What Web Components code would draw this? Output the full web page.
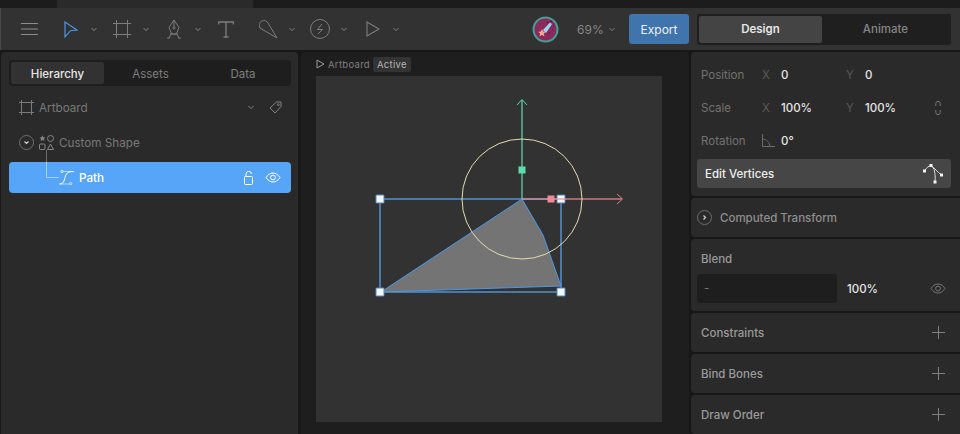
<!doctype html>
<html>
<head>
<meta charset="utf-8">
<style>
  html, body { margin: 0; height: 100%; background: #171717; overflow: hidden; }
  body { font: 11.5px Inter, "Liberation Sans", sans-serif; }
</style>
</head>
<body>
<editor-app></editor-app>
<script>
// small helper so every element gets its shadow root the same way
class Base extends HTMLElement {
  connectedCallback() {
    if (this.shadowRoot) return;
    this.attachShadow({ mode: "open" });
    this.shadowRoot.innerHTML = this.render();
  }
}

const caret = `<svg class="caret" width="6" height="5" viewBox="0 0 6 5" fill="none" stroke="#858585" stroke-width="1"><path d="M.5 1L3 3.600 5.500 1"/></svg>`;
const eye = (c) => `<svg width="16" height="11" viewBox="0 0 16 11" fill="none" stroke="${c}" stroke-width="1"><path d="M1 5.500C3 2.500 5.300 1 8 1s5 1.500 7 4.500C13 8.500 10.700 10 8 10S3 8.500 1 5.500z"/><circle cx="8" cy="5.500" r="2.400"/></svg>`;

customElements.define("tool-button", class extends Base {
  render() {
    const hasCaret = this.hasAttribute("caret");
    return `<style>
      :host { display: flex; align-items: center; flex: none; }
      ::slotted(svg) { display: block; }
      .caret { margin-left: var(--caret-gap, 12px); display: block; }
    </style><slot></slot>${hasCaret ? caret : ""}`;
  }
});

customElements.define("app-toolbar", class extends Base {
  render() {
    return `<style>
      :host { display: block; flex: none; }
      .strip { height: 8px; display: flex; background: #1c1c1c; }
      .strip i { display: block; width: 196px; margin-left: 57px; background: #2a2a2a; }
      .bar { height: 42px; background: #323232; display: flex; align-items: center; border-left: 1px solid #4a4a4a; box-sizing: border-box; }
      .tools { display: flex; align-items: center; }
      .spacer { flex: 1; }
      .zoom { color: #858585; font-size: 12px; display: flex; align-items: center; gap: 5px; width: 46px; margin-left: 18px; flex: none; }
      .export { width: 60px; height: 30px; background: #3f74ad; border-radius: 3px; color: #f0f0f0; font-size: 12px; display: flex; align-items: center; justify-content: center; margin-left: 6px; flex: none; }
      .avatar { display: block; flex: none; }
      mode-tabs { margin: 0 9px 0 8px; }
    </style>
    <div class="strip"><i></i></div>
    <div class="bar">
      <div class="tools">
        <tool-button style="margin-left:20px"><svg width="17" height="14" viewBox="0 0 17 14" fill="none" stroke="#8c8c8c"><path d="M0 1.500h17M0 7h17M0 12.500h17"/></svg></tool-button>
        <tool-button caret style="margin-left:26px;--caret-gap:13px"><svg width="14" height="17" viewBox="0 0 14 17" fill="none" stroke="#4a97e6" stroke-width="1.200"><path d="M1 1l12 8-6.500.7L1 15.800z"/></svg></tool-button>
        <tool-button caret style="margin-left:16px"><svg width="18" height="18" viewBox="0 0 18 18" fill="none" stroke="#7d7d7d"><path d="M3.500 0v18M14.500 0v18M0 3.500h18M0 14.500h18"/></svg></tool-button>
        <tool-button caret style="margin-left:18px;--caret-gap:14px"><svg width="14" height="20" viewBox="0 0 14 20" fill="none" stroke="#7d7d7d"><path d="M7 1l5 7.500-2.500 6.500h-5L2 8.500zM7 1v7"/><circle cx="7" cy="9" r="1"/><path d="M3.500 15h7M2 19l2-4M12 19l-2-4M0 19h3M11 19h3"/></svg></tool-button>
        <tool-button style="margin-left:17px"><svg width="16" height="17" viewBox="0 0 16 17" fill="none" stroke="#7d7d7d" stroke-width="1.300"><path d="M.7 3.500V1h14.600v2.500M8 1v15M5.500 16h5"/></svg></tool-button>
        <tool-button caret style="margin-left:25px;--caret-gap:11px"><svg width="19" height="19" viewBox="0 0 19 19" fill="none" stroke="#7d7d7d"><path d="M1 8C-.5 5 .5 2 3 1c2.500-1.200 5 0 6 2l9 15z"/></svg></tool-button>
        <tool-button caret style="margin-left:15px;--caret-gap:11px"><svg width="20" height="20" viewBox="0 0 20 20" fill="none" stroke="#7d7d7d"><circle cx="10" cy="10" r="9.500"/><path d="M12 5l-4.500 5.500h5L8 15"/></svg></tool-button>
        <tool-button caret style="margin-left:19px;--caret-gap:13px"><svg width="14" height="16" viewBox="0 0 14 16" fill="none" stroke="#7d7d7d" stroke-width="1.100"><path d="M1 1l12 7-12 7z"/></svg></tool-button>
      </div>
      <div class="spacer"></div>
      <svg class="avatar" width="27" height="27" viewBox="0 0 27 27">
        <circle cx="13.500" cy="13.500" r="12" fill="#8a2a5c" stroke="#45a092" stroke-width="2"/>
        <path d="M11 14l7-7.500 2 1.500-6 9z" fill="#9fd4ee"/>
        <path d="M10 13l1.200 2.500 2.600.3-1.900 1.800.5 2.600-2.400-1.300-2.400 1.300.5-2.600L6.200 15.800l2.600-.3z" fill="#f1a98c"/>
        <path d="M18 6l2-1M21 10h1M15 7l1-1M17 17h1M20 14h1" stroke="#2b1a3a"/>
      </svg>
      <div class="zoom">69% ${caret}</div>
      <div class="export">Export</div>
      <mode-tabs></mode-tabs>
    </div>`;
  }
});

customElements.define("mode-tabs", class extends Base {
  render() {
    return `<style>
      :host { display: flex; width: 254px; height: 31px; background: #1f1f1f; border-radius: 3px; padding: 2px; box-sizing: border-box; flex: none; }
      div { display: flex; align-items: center; justify-content: center; }
      .on { width: 123px; background: #444; color: #e6e6e6; font-weight: 600; border-radius: 2px; }
      .off { flex: 1; color: #858585; font-weight: 500; }
    </style><div class="on">Design</div><div class="off">Animate</div>`;
  }
});

customElements.define("hierarchy-panel", class extends Base {
  render() {
    return `<style>
      :host { display: block; width: 297px; margin-left: 1px; background: #2a2a2a; border-radius: 4px 4px 0 0; flex: none; padding: 8px 7px 0 8px; box-sizing: border-box; }
      .tabs { height: 26px; background: #1e1e1e; border-radius: 3px; display: grid; grid-template-columns: 93px 93px 1fr; padding: 2px; box-sizing: border-box; color: #7e7e7e; }
      .tabs div { display: flex; align-items: center; justify-content: center; padding-top: 1px; }
      .tabs .on { background: #323232; color: #e8e8e8; border-radius: 2px; font-weight: 500; }
      .row { display: flex; align-items: center; font-size: 11.700px; color: #787878; }
      .artboard { height: 35px; margin-top: 4px; padding: 0 9px 0 10px; }
      .artboard span { margin-left: 5px; flex: 1; }
      .artboard svg.tag { margin-left: 15px; }
      .shape { height: 35px; padding-left: 10px; }
      .shape span { margin-left: 5px; }
      .shape .chev { margin-right: 5px; }
      .path { height: 31px; margin-top: 2px; background: #57a5f8; color: #fff; border-radius: 4px; padding: 0 10px 0 50px; position: relative; font-weight: 500; }
      .path span { margin-left: 5px; flex: 1; }
      .path .lock { margin-right: 11px; }
      .link { position: absolute; left: 37px; top: -12px; height: 12px; border-left: 1px solid #6b6b6b; }
      .link2 { position: absolute; left: 37px; top: 0; width: 12px; height: 15px; border: solid #a5cffb; border-width: 0 0 1px 1px; }
      svg { display: block; flex: none; }
    </style>
    <div class="tabs"><div class="on">Hierarchy</div><div>Assets</div><div>Data</div></div>
    <div class="row artboard">
      <svg width="15" height="15" viewBox="0 0 15 15" fill="none" stroke="#7a7a7a"><path d="M2.500 0v15M12.500 0v15M0 2.500h15M0 12.500h15"/></svg>
      <span>Artboard</span>
      ${caret}
      <svg class="tag" width="13" height="13" viewBox="0 0 13 13" fill="none" stroke="#858585"><path d="M7.500 1H12v4.500L6 12 1 7z"/><circle cx="9.300" cy="3.700" r=".9"/></svg>
    </div>
    <div class="row shape">
      <svg class="chev" width="15" height="15" viewBox="0 0 15 15" fill="none"><circle cx="7.500" cy="7.500" r="7" stroke="#6e6e6e"/><path d="M5.500 6.500l2 2 2-2" stroke="#d0d0d0" stroke-width="1.200"/></svg>
      <svg width="15" height="15" viewBox="0 0 15 15" fill="none" stroke="#858585"><path d="M3.500.3l.9 1.900 2.100.2-1.500 1.400.4 2.100-1.900-1-1.900 1 .4-2.100L.5 2.400l2.100-.2z" fill="#858585" stroke="none"/><circle cx="11.500" cy="3.500" r="3"/><rect x=".5" y="9" width="5.500" height="5.500" rx="1"/><path d="M11.500 9l3 5.500h-6z"/></svg>
      <span>Custom Shape</span>
    </div>
    <div class="row path">
      <div class="link"></div><div class="link2"></div>
      <svg width="15" height="15" viewBox="0 0 15 15" fill="none"><path d="M3.500 1.500H15M.3 14h10" stroke="#b5d7fc"/><path d="M.5 14c4 0 4.500-3 5.500-6.500S8 1.500 14.500 1.500" stroke="#fff"/><circle cx="3" cy="1.500" r="1.200" stroke="#d5e8fe"/><circle cx="11.700" cy="13.800" r="1.200" stroke="#d5e8fe"/></svg>
      <span>Path</span>
      <svg class="lock" width="10" height="14" viewBox="0 0 10 14" fill="none" stroke="#fff"><rect x=".5" y="5.500" width="8" height="8" rx="1"/><path d="M2 5.500V3a2.700 2.700 0 0 1 5.400 0"/></svg>
      ${eye("#fff")}
    </div>`;
  }
});

customElements.define("stage-view", class extends Base {
  render() {
    return `<style>
      :host { display: block; width: 388px; margin-left: 3px; background: #1e1e1e; border-radius: 4px 4px 0 0; flex: none; box-sizing: border-box; padding: 0 27px 0 15px; }
      .crumb { height: 24px; display: flex; align-items: center; font-size: 9.500px; letter-spacing: .3px; color: #7e7e7e; }
      .crumb svg { margin-right: 3px; }
      .crumb b { font-weight: 400; margin-left: 3px; background: #333; color: #b5b5b5; padding: 2px 4px; border-radius: 2px; }
      .board { width: 346px; height: 346px; background: #323232; }
    </style>
    <div class="crumb"><svg width="9" height="10" viewBox="0 0 9 10" fill="none" stroke="#9a9a9a"><path d="M1 1l7 4-7 4z"/></svg>Artboard<b>Active</b></div>
    <div class="board"><gizmo-layer></gizmo-layer></div>`;
  }
});

// the svg sits on the artboard origin (316, 76) so numbers below are artboard coords
customElements.define("gizmo-layer", class extends Base {
  render() {
    const handle = (x, y) => `<rect x="${x - 4}" y="${y - 4}" width="8" height="8" rx=".5" fill="#f4f6f8" stroke="#4f86bd" stroke-width="1"/>`;
    return `<style>:host { display: block; } svg { display: block; }</style>
    <svg width="346" height="346" viewBox="0 0 346 346" fill="none">
      <rect x="64" y="123" width="181" height="93" stroke="#4a78a8" stroke-width="2"/>
      <path d="M206 123L227 159 245 210 65 216z" fill="#747474" stroke="#4b98ea" stroke-width="1"/>
      ${handle(64, 123)}${handle(245, 123)}${handle(64, 216)}${handle(245, 216)}
      <path d="M206 123V24" stroke="#5fdcae" stroke-width="2" opacity=".6"/>
      <path d="M201 29l5-5.500 5 5.500" stroke="#5fd6a9"/>
      <path d="M206 123H306" stroke="#f28b96" stroke-width="2" opacity=".6"/>
      <path d="M301 118l5.500 5-5.500 5" stroke="#e0808a"/>
      <circle cx="206" cy="123" r="60" stroke="#e2dcb0" stroke-width="1"/>
      <rect x="202.500" y="90.500" width="7" height="7" fill="#5fdcae"/>
      <rect x="231.500" y="119.500" width="7" height="7" fill="#f28b96"/>
    </svg>`;
  }
});

customElements.define("inspector-section", class extends Base {
  render() {
    return `<style>
      :host { display: block; background: #2a2a2a; border-radius: 4px 0 0 4px; box-sizing: border-box; padding: 0 9px 0 6px; }
    </style><slot></slot>`;
  }
});

customElements.define("prop-row", class extends Base {
  render() {
    const a = this.dataset;
    return `<style>
      :host { display: grid; grid-template-columns: 61px 19px 65px 19px 1fr auto; align-items: center; height: 33px; padding-left: 4px; color: #e6e6e6; font-weight: 500; }
      .l { color: #727272; font-weight: 400; }
      .a { color: #5a5a5a; font-weight: 400; }
    </style>
    <span class="l">${a.label}</span><span class="a"><slot name="axis">X</slot></span><span>${a.x}</span>
    <span class="a">${a.y !== undefined ? "Y" : ""}</span><span>${a.y || ""}</span><slot></slot>`;
  }
});

customElements.define("add-row", class extends Base {
  render() {
    return `<style>
      :host { display: flex; align-items: center; justify-content: space-between; height: 100%; padding: 0 6px 0 4px; font-weight: 500; color: #9a9a9a; }
      svg { display: block; }
    </style><span>${this.dataset.label}</span>
    <svg width="13" height="13" viewBox="0 0 13 13" stroke="#808080"><path d="M6.500 0v13M0 6.500h13"/></svg>`;
  }
});

customElements.define("inspector-panel", class extends Base {
  render() {
    return `<style>
      :host { display: flex; flex-direction: column; gap: 2px; width: 269px; margin-left: 2px; flex: none; }
      .a { height: 144px; padding-top: 6px; box-sizing: border-box; }
      .edit { height: 29px; margin-top: 2px; background: #464646; border-radius: 3px; color: #eee; font-weight: 500; display: flex; align-items: center; justify-content: space-between; padding: 0 8px; }
      .ct { height: 39px; display: flex; align-items: center; gap: 8px; font-weight: 500; color: #8f8f8f; }
      .ct svg, .edit svg { display: block; }
      .blend { height: 72px; }
      .blend h4 { margin: 0; font-size: inherit; font-weight: 500; color: #9a9a9a; height: 35px; box-sizing: border-box; display: flex; align-items: center; padding: 4px 0 0 4px; }
      .bl { display: flex; align-items: center; color: #e6e6e6; font-weight: 500; }
      .bl i { display: block; width: 140px; height: 29px; line-height: 29px; background: #1e1e1e; border-radius: 3px; color: #777; font-style: normal; font-weight: 400; padding-left: 7px; box-sizing: border-box; margin-right: 10px; }
      .bl span { flex: 1; }
      .bl svg { display: block; margin-right: 5px; }
      .s { height: 39px; }
    </style>
    <inspector-section class="a">
      <prop-row data-label="Position" data-x="0" data-y="0"></prop-row>
      <prop-row data-label="Scale" data-x="100%" data-y="100%"><svg style="display:block;margin-right:10px" width="6" height="14" viewBox="0 0 6 14" fill="none" stroke="#777"><path d="M.8 5V2.500a2.200 2.200 0 0 1 4.400 0V5M.8 9v2.500a2.200 2.200 0 0 0 4.400 0V9"/></svg></prop-row>
      <prop-row data-label="Rotation" data-x="0°"><svg slot="axis" style="display:block" width="13" height="13" viewBox="0 0 13 13" fill="none" stroke="#6e6e6e"><path d="M.5 0v12.500H13M.5 5c4 0 7 3.500 7.500 7.500"/></svg></prop-row>
      <div class="edit">Edit Vertices
        <svg width="21" height="21" viewBox="0 0 21 21" fill="none" stroke="#ddd"><path d="M2.500 8C4 5 6.500 3 9 2.500M9 2.500c2 1.500 3 3 3.500 5.500s1 7 .5 11M9.500 3c3 2 6 6 10 9"/><g fill="#f2f2f2" stroke="none"><rect x="1" y="6.500" width="3" height="3"/><rect x="7.500" y="1" width="3" height="3"/><rect x="18" y="10.500" width="3" height="3"/><rect x="11.500" y="17.500" width="3" height="3"/></g></svg>
      </div>
    </inspector-section>
    <inspector-section><div class="ct">
      <svg width="15" height="15" viewBox="0 0 15 15" fill="none"><circle cx="7.500" cy="7.500" r="7" stroke="#6e6e6e"/><path d="M6.500 5.500l2 2-2 2" stroke="#d0d0d0" stroke-width="1.200"/></svg>
      Computed Transform</div></inspector-section>
    <inspector-section class="blend">
      <h4>Blend</h4>
      <div class="bl"><i>-</i><span>100%</span>${eye("#757575")}</div>
    </inspector-section>
    <inspector-section class="s"><add-row data-label="Constraints"></add-row></inspector-section>
    <inspector-section class="s"><add-row data-label="Bind Bones"></add-row></inspector-section>
    <inspector-section class="s"><add-row data-label="Draw Order"></add-row></inspector-section>`;
  }
});

customElements.define("editor-app", class extends Base {
  render() {
    return `<style>
      :host { display: flex; flex-direction: column; width: 960px; height: 434px; overflow: hidden; }
      main { display: flex; flex: 1; min-height: 0; padding-top: 2px; }
    </style>
    <app-toolbar></app-toolbar>
    <main>
      <hierarchy-panel></hierarchy-panel>
      <stage-view></stage-view>
      <inspector-panel></inspector-panel>
    </main>`;
  }
});
</script>
</body>
</html>
